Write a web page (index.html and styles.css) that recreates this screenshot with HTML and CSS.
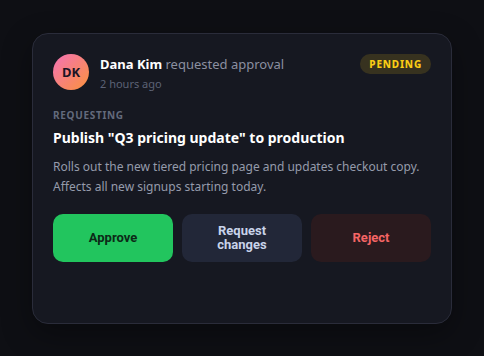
FILE: index.html
```html
<!DOCTYPE html>
<html>
<head>
<meta charset="utf-8">
<link rel="stylesheet" href="styles.css">
</head>
<body>
<div class="card">
  <div class="head">
    <div class="avatar">DK</div>
    <div class="who">
      <div class="line"><span class="name">Dana Kim</span> <span class="action">requested approval</span></div>
      <div class="time">2 hours ago</div>
    </div>
    <span class="badge">PENDING</span>
  </div>
  <div class="label">REQUESTING</div>
  <div class="title">Publish "Q3 pricing update" to production</div>
  <p class="desc">Rolls out the new tiered pricing page and updates checkout copy. Affects all new signups starting today.</p>
  <div class="actions">
    <button class="btn approve">Approve</button>
    <button class="btn changes">Request changes</button>
    <button class="btn reject">Reject</button>
  </div>
</div>
</body>
</html>
```
FILE: styles.css
```css
html, body { margin: 0; height: 100%; }
body {
  background: #0e0f14;
  font-family: "Noto Sans", "Open Sans", sans-serif;
  display: flex;
  align-items: center;
  justify-content: center;
}
.card {
  box-sizing: border-box;
  width: 420px;
  height: 291px;
  background: #161821;
  border: 1px solid #2a2c3a;
  border-radius: 16px;
  padding: 20px;
  box-shadow: 0 10px 30px rgba(0,0,0,0.35);
}
.head { display: flex; align-items: flex-start; gap: 11px; }
.avatar {
  width: 36px; height: 36px; border-radius: 50%;
  background: linear-gradient(135deg, #f472b6, #fb923c);
  color: #1b1424;
  font-weight: 700; font-size: 13px;
  display: flex; align-items: center; justify-content: center;
  flex: none;
}
.who { flex: 1; padding-top: 1px; }
.line { font-size: 13px; line-height: 18px; }
.name { color: #ffffff; font-weight: 700; }
.action { color: #8b8fa0; }
.time { font-size: 11px; color: #5c6275; margin-top: 3px; line-height: 16px; }
.badge {
  background: rgba(250, 204, 21, 0.15);
  color: #facc15;
  font-size: 10px; font-weight: 800; letter-spacing: 0.8px;
  padding: 3px 9px; border-radius: 999px; line-height: 14px;
}
.label {
  margin-top: 16px;
  font-size: 10px; font-weight: 700; letter-spacing: 0.7px;
  color: #636a7c; line-height: 14px;
}
.title {
  margin-top: 6px;
  color: #ffffff; font-weight: 700; font-size: 14px; line-height: 20px;
}
.desc {
  margin: 9px 0 0;
  color: #959bab; font-size: 12px; line-height: 20px;
}
.actions {
  margin-top: 17px;
  display: grid; grid-template-columns: 1fr 1fr 1fr; gap: 9px;
}
.btn {
  height: 48px; border: 0; border-radius: 10px;
  font-family: Roboto, "Liberation Sans", sans-serif;
  font-size: 13px; font-weight: 700; line-height: 14px;
  padding: 0 16px;
}
.approve { background: #22c55e; color: #0c2a17; }
.changes { background: #222738; color: #c9d3ea; }
.reject { background: #2a1a1e; color: #f56565; }
```
